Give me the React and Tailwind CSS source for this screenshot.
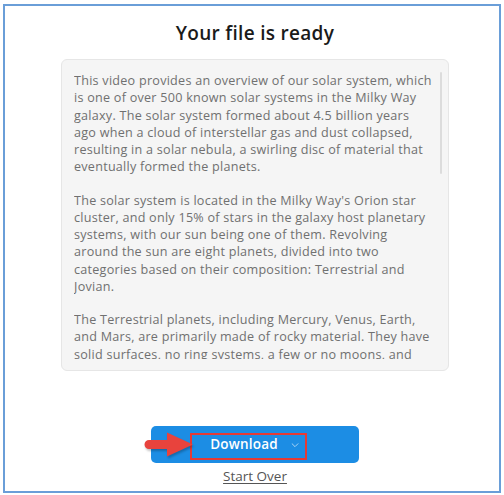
import React from 'react';

const paragraphs = [
  [
    'This video provides an overview of our solar system, which',
    'is one of over 500 known solar systems in the Milky Way',
    'galaxy. The solar system formed about 4.5 billion years',
    'ago when a cloud of interstellar gas and dust collapsed,',
    'resulting in a solar nebula, a swirling disc of material that',
    'eventually formed the planets.',
  ],
  [
    "The solar system is located in the Milky Way's Orion star",
    'cluster, and only 15% of stars in the galaxy host planetary',
    'systems, with our sun being one of them. Revolving',
    'around the sun are eight planets, divided into two',
    'categories based on their composition: Terrestrial and',
    'Jovian.',
  ],
  [
    'The Terrestrial planets, including Mercury, Venus, Earth,',
    'and Mars, are primarily made of rocky material. They have',
    'solid surfaces, no ring systems, a few or no moons, and',
  ],
];

function App() {
  return (
    <div className="w-[504px] h-[495px] bg-white pt-[4px] pl-[3px] font-['Open_Sans',sans-serif]">
      <div className="w-[498px] h-[489px] border-2 border-[#6a9ed8] pl-[56px] pt-[12px]">
        <div className="w-[388px] flex flex-col items-center">
          <h1 className="text-[19px] leading-[30px] font-semibold text-[#1a1a1a] tracking-[0.3px]">
            Your file is ready
          </h1>

          {/* texto */}
          <div className="mt-[11px] w-full h-[312px] bg-[#f5f5f5] border border-[#e6e6e6] rounded-md pl-[12px] pr-[6px] pt-[12px] pb-[11px] flex">
            <div className="flex-1 overflow-hidden text-[12.6px] leading-[17.25px] tracking-[0.25px] text-[#707070]">
              {paragraphs.map((lines, i) => (
                <p key={i} className="mb-[16px]">
                  {lines.map((line, j) => (
                    <span key={j} className="block whitespace-nowrap">
                      {line}
                    </span>
                  ))}
                </p>
              ))}
            </div>
            <div className="w-[2px] ml-[4px]">
              <div className="h-[102px] bg-[#dcdcdc] rounded-full"></div>
            </div>
          </div>

          <div className="relative mt-[55px]">
            <button className="w-[208px] h-[37px] bg-[#1c8de4] rounded-[5px] flex items-center justify-center gap-[12px] text-white">
              <span className="text-[13.5px] font-semibold tracking-[0.2px]">Download</span>
              <svg
                className="w-[10px] h-[10px] opacity-75"
                viewBox="0 0 24 24"
                fill="none"
                stroke="currentColor"
                strokeWidth="2"
                strokeLinecap="round"
                strokeLinejoin="round"
              >
                <path d="M5 9l7 7 7-7" />
              </svg>
            </button>
            {/* anotación */}
            <div className="absolute left-[39px] top-[7px] w-[117px] h-[27px] border-2 border-[#e53a35]"></div>
            <svg
              className="absolute left-[-8px] top-[2px] w-[54px] h-[32px] drop-shadow-[1px_2px_1px_rgba(0,0,0,0.25)]"
              viewBox="0 0 54 32"
            >
              <path
                d="M6 12 H24 V4.5 L50 16.5 L24 28.5 V21 H6 A4.5 4.5 0 0 1 6 12 Z"
                fill="#e8433d"
              />
            </svg>
          </div>

          <a href="#" className="mt-[3px] text-[13.5px] font-medium text-[#555555] underline underline-offset-2">
            Start Over
          </a>
        </div>
      </div>
    </div>
  );
}

export default App;
